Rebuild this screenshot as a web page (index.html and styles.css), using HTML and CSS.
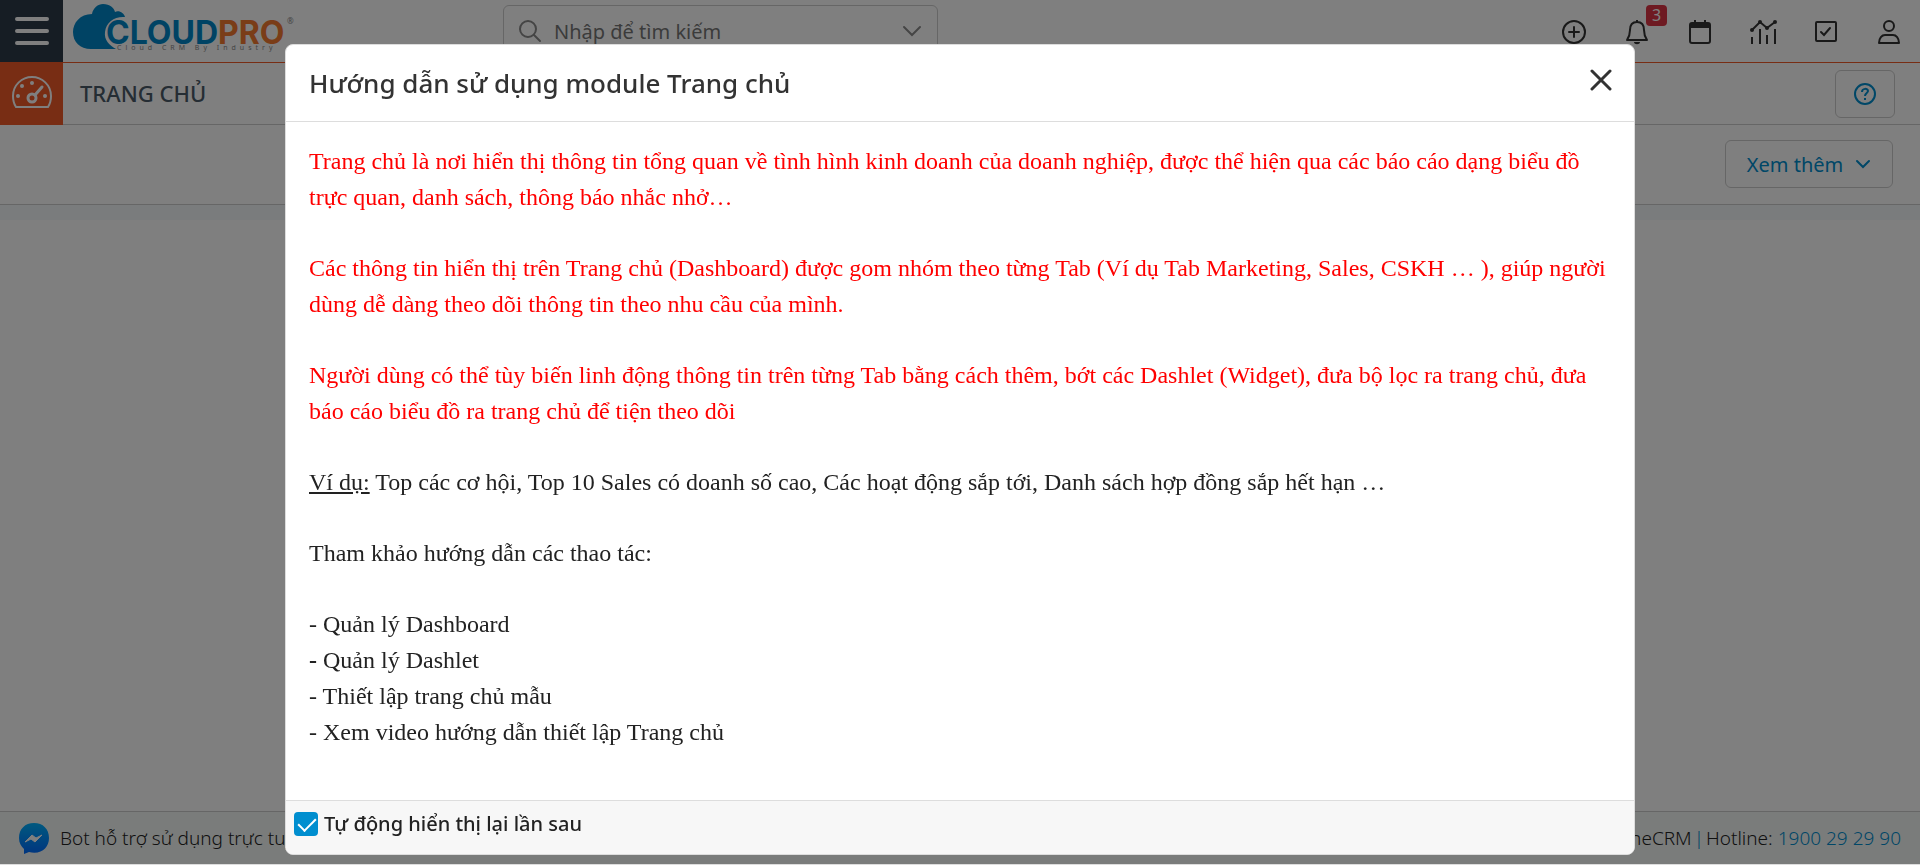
FILE: index.html
```
<!DOCTYPE html>
<html lang="vi">
<head>
	<meta charset="UTF-8">
	<meta name="viewport" content="width=device-width, initial-scale=1.0">
	<title>Trang chủ</title>
	<link rel="stylesheet" href="styles.css">
</head>
<body>
	<div class="page">
		<header class="topbar">
			<button class="menu-btn" aria-label="Menu">
				<svg width="36" height="30" viewBox="0 0 36 30" stroke="#fff" stroke-width="4" stroke-linecap="round"><path d="M3 3h30M3 15h30M3 27h30"/></svg>
			</button>
			<a class="logo" href="#" aria-label="CloudPro">
				<svg width="224" height="52" viewBox="0 0 224 52">
					<path d="M44 46H19C8 46 1 39 1 29c0-9 7-18 19-18C21 5 26 1 31 1c7 0 11 4 12 8 4-2 9 1 10 5-10-1-19 5-20 15-1 8 4 13 11 17z" fill="#0087c9"/>
					<text class="logo-name" x="34" y="41" fill="#0087c9">CLOUD<tspan fill="#f47b30">PRO</tspan></text>
					<text class="logo-tag" x="45" y="47">Cloud CRM By Industry</text>
					<text class="logo-mark" x="215" y="21">®</text>
				</svg>
			</a>
			<div class="search">
				<svg width="24" height="24" viewBox="0 0 24 24" fill="none" stroke="#8a8a8a" stroke-width="2" stroke-linecap="round"><circle cx="10" cy="10" r="8"/><path d="M16 16l6 6"/></svg>
				<input type="text" placeholder="Nhập để tìm kiếm" aria-label="Nhập để tìm kiếm">
				<svg width="20" height="12" viewBox="0 0 20 12" fill="none" stroke="#8a8a8a" stroke-width="2" stroke-linecap="round"><path d="M2 2l8 8 8-8"/></svg>
			</div>
			<nav class="tools">
				<button aria-label="Thêm">
					<svg width="26" height="26" viewBox="0 0 26 26" fill="none" stroke="currentColor" stroke-width="2" stroke-linecap="round"><circle cx="13" cy="13" r="11"/><path d="M13 8v10M8 13h10"/></svg>
				</button>
				<button aria-label="Thông báo">
					<svg width="26" height="26" viewBox="0 0 26 26" fill="none" stroke="currentColor" stroke-width="2" stroke-linejoin="round"><path d="M13 3c-5 0-7 3-7 8 0 5-1 7-3 10h20c-2-3-3-5-3-10 0-5-2-8-7-8zM13 1v2"/><path d="M10 23h6c0 3-6 3-6 0z" fill="currentColor" stroke="none"/></svg>
					<span class="badge">3</span>
				</button>
				<button aria-label="Lịch">
					<svg width="26" height="26" viewBox="0 0 26 26" fill="none" stroke="currentColor" stroke-width="2"><rect x="3" y="4" width="20" height="20" rx="2"/><path d="M3 4h20v5H3z" fill="currentColor" stroke="none"/><path d="M8 1v4M18 1v4"/></svg>
				</button>
				<button aria-label="Báo cáo">
					<svg width="28" height="26" viewBox="0 0 28 26" fill="none" stroke="currentColor" stroke-width="2"><path d="M3 11l8-8 7 6 8-6M3 18v7M11 10v15M18 16v9M26 10v15"/><g fill="currentColor" stroke="none"><circle cx="3" cy="11" r="2"/><circle cx="11" cy="3" r="2"/><circle cx="18" cy="9" r="2"/><circle cx="26" cy="3" r="2"/></g></svg>
				</button>
				<button aria-label="Công việc">
					<svg width="26" height="26" viewBox="0 0 26 26" fill="none" stroke="currentColor" stroke-width="2" stroke-linecap="round"><rect x="3" y="3" width="20" height="19" rx="1"/><path d="M8 13l3 3 6-7"/></svg>
				</button>
				<button aria-label="Tài khoản">
					<svg width="26" height="26" viewBox="0 0 26 26" fill="none" stroke="currentColor" stroke-width="2" stroke-linejoin="round"><circle cx="13" cy="7" r="5"/><path d="M3 24c0-5 3-8 6-8h8c3 0 6 3 6 8z"/></svg>
				</button>
			</nav>
		</header>

		<div class="module-bar">
			<a class="module-icon" href="#" aria-label="Trang chủ">
				<svg width="42" height="34" viewBox="0 0 42 34" fill="none" stroke="#fff" stroke-width="2"><path d="M5 32h32c2-3 3-7 3-11C40 10 31 2 21 2S2 10 2 21c0 4 1 8 3 11z"/><circle cx="21" cy="23" r="4" stroke-width="3"/><path d="M24 20l7-8" stroke-width="3" stroke-linecap="round"/><g fill="#fff" stroke="none"><circle cx="7" cy="21" r="2"/><circle cx="11" cy="11" r="2"/><circle cx="21" cy="8" r="2"/><circle cx="34" cy="21" r="2"/></g></svg>
			</a>
			<h1>TRANG CHỦ</h1>
			<button class="outline-btn help-btn" aria-label="Trợ giúp">
				<svg width="22" height="22" viewBox="0 0 22 22" fill="none" stroke="currentColor" stroke-width="2"><circle cx="11" cy="11" r="10"/><path d="M8 9c0-4 6-4 6-1 0 2-3 2-3 5M11 15v2"/></svg>
			</button>
		</div>

		<div class="dashboard-bar">
			<button class="outline-btn more-btn">Xem thêm
				<svg width="16" height="10" viewBox="0 0 16 10" fill="none" stroke="currentColor" stroke-width="2" stroke-linecap="round"><path d="M2 2l6 6 6-6"/></svg>
			</button>
		</div>
		<main class="dashboard"></main>

		<footer class="page-footer">
			<a class="bot" href="#">
				<svg width="30" height="31" viewBox="0 0 30 31"><defs><linearGradient id="bot" x1="0" y1="0" x2="0" y2="1"><stop offset="0" stop-color="#00b2ff"/><stop offset="1" stop-color="#006aff"/></linearGradient></defs><path d="M15 0C6 0 0 6 0 15c0 5 2 8 5 11v5l5-2c12 3 20-4 20-14C30 6 24 0 15 0z" fill="url(#bot)"/><path d="M6 19l7-7 4 3 6-3-7 7-4-3z" fill="#fff" stroke="#fff"/></svg>
				<span>Bot hỗ trợ sử dụng trực tuyến</span>
			</a>
			<div class="copyright">OnlineCRM<span class="sep">|</span>Hotline: <a href="tel:1900292990">1900 29 29 90</a></div>
		</footer>
	</div>

	<div class="overlay">
		<div class="modal" role="dialog" aria-labelledby="modalTitle">
			<div class="modal-header">
				<h2 id="modalTitle">Hướng dẫn sử dụng module Trang chủ</h2>
				<button class="close-btn" aria-label="Đóng">
					<svg width="22" height="22" viewBox="0 0 22 22" stroke="#333" stroke-width="3" stroke-linecap="round"><path d="M2 2l18 18M20 2L2 20"/></svg>
				</button>
			</div>
			<div class="modal-body">
				<p class="red">Trang chủ là nơi hiển thị thông tin tổng quan về tình hình kinh doanh của doanh nghiệp, được thể hiện qua các báo cáo dạng biểu đồ trực quan, danh sách, thông báo nhắc nhở…</p>
				<p class="red">Các thông tin hiển thị trên Trang chủ (Dashboard) được gom nhóm theo từng Tab (Ví dụ Tab Marketing, Sales, CSKH … ), giúp người dùng dễ dàng theo dõi thông tin theo nhu cầu của mình.</p>
				<p class="red">Người dùng có thể tùy biến linh động thông tin trên từng Tab bằng cách thêm, bớt các Dashlet (Widget), đưa bộ lọc ra trang chủ, đưa báo cáo biểu đồ ra trang chủ để tiện theo dõi</p>
				<p><u>Ví dụ:</u> Top các cơ hội, Top 10 Sales có doanh số cao, Các hoạt động sắp tới, Danh sách hợp đồng sắp hết hạn …</p>
				<p>Tham khảo hướng dẫn các thao tác:</p>
				<ul>
					<li>- Quản lý Dashboard</li>
					<li><b>-</b> Quản lý Dashlet</li>
					<li>- Thiết lập trang chủ mẫu</li>
					<li>- Xem video hướng dẫn thiết lập Trang chủ</li>
				</ul>
			</div>
			<div class="modal-footer">
				<input type="checkbox" id="autoShow" checked>
				<label for="autoShow">Tự động hiển thị lại lần sau</label>
			</div>
		</div>
	</div>
</body>
</html>
```
FILE: styles.css
```
* {
	box-sizing: border-box;
}

body {
	margin: 0;
	font-family: 'Noto Sans', sans-serif;
	font-size: 20px;
	color: #222;
	background-color: #fff;
}

button {
	font: inherit;
	padding: 0;
	border: none;
	background: none;
	cursor: pointer;
}

svg {
	display: block;
}

a {
	color: #008ecf;
	text-decoration: none;
}

.page {
	display: flex;
	flex-direction: column;
	height: 100vh;
	padding-bottom: 1px;
}

/* top bar */
.topbar {
	display: flex;
	align-items: flex-start;
	height: 63px;
	border-bottom: 1px solid #f15a29;
}

.menu-btn {
	display: flex;
	justify-content: center;
	align-items: center;
	width: 63px;
	height: 62px;
	background-color: #2c3b49;
}

.logo {
	margin: 3px 0 0 9px;
}

.logo-name {
	font-family: Inter, sans-serif;
	font-weight: 700;
	font-size: 32px;
}

.logo-tag {
	font-size: 7px;
	letter-spacing: 4px;
	fill: #888;
}

.logo-mark {
	font-size: 8px;
	fill: #888;
}

.search {
	display: flex;
	align-items: center;
	width: 435px;
	height: 52px;
	margin: 5px 0 0 207px;
	padding: 0 15px 0 14px;
	border: 1px solid #ccc;
	border-radius: 6px;
}

.search input {
	flex: 1;
	min-width: 0;
	padding: 0 12px;
	border: none;
	outline: none;
	background: transparent;
	font: inherit;
}

.search input::placeholder {
	color: #777;
}

.tools {
	display: flex;
	margin: 19px 0 0 auto;
}

.tools button {
	position: relative;
	display: flex;
	justify-content: center;
	width: 63px;
	color: #333;
}

.badge {
	position: absolute;
	top: -14px;
	right: 1px;
	width: 21px;
	border-radius: 4px;
	background-color: #dc3545;
	color: #fff;
	font-size: 16px;
	line-height: 21px;
}

/* module bar */
.module-bar {
	display: flex;
	align-items: center;
	height: 62px;
	padding-right: 25px;
	border-bottom: 1px solid #ccc;
}

.module-icon {
	display: flex;
	justify-content: center;
	align-items: center;
	width: 63px;
	height: 62px;
	padding-bottom: 4px;
	background-color: #f15a29;
}

.module-bar h1 {
	margin: 0 auto 0 17px;
	padding-bottom: 2px;
	color: #4b5b69;
	font-size: 22px;
	font-weight: 500;
}

.outline-btn {
	display: flex;
	justify-content: center;
	align-items: center;
	gap: 12px;
	height: 48px;
	border: 1px solid #ccc;
	border-radius: 6px;
	color: #008ecf;
}

.help-btn {
	width: 60px;
}

.dashboard-bar {
	display: flex;
	justify-content: flex-end;
	padding: 15px 27px 16px;
	border-bottom: 1px solid #ccc;
}

.more-btn {
	width: 168px;
}

.dashboard {
	flex: 1;
	border-top: 15px solid #f5f8fa;
}

.page-footer {
	display: flex;
	justify-content: space-between;
	align-items: center;
	height: 53px;
	padding: 0 19px;
	border-top: 1px solid #ccc;
	background-color: #f5f8f6;
	font-size: 19px;
	font-weight: 300;
}

.bot {
	display: flex;
	align-items: center;
	gap: 11px;
	color: #222;
}

.sep {
	padding: 0 2px;
	color: #008ecf;
}

/* guide popup */
.overlay {
	position: fixed;
	inset: 0;
	display: flex;
	justify-content: center;
	align-items: flex-start;
	padding-top: 44px;
	border-bottom: 1px solid #ddd;
	background-color: rgba(0, 0, 0, 0.5);
	background-clip: padding-box;
}

.modal {
	width: 90%;
	max-width: 1350px;
	border: 1px solid #ddd;
	border-radius: 8px;
	background-color: #fff;
	overflow: hidden;
}

.modal-header {
	display: flex;
	justify-content: space-between;
	align-items: center;
	height: 77px;
	padding: 0 22px 0 23px;
	border-bottom: 1px solid #ddd;
}

.modal-header h2 {
	margin: 0;
	color: #333;
	font-size: 26px;
	font-weight: 500;
}

.close-btn {
	padding-bottom: 6px;
}

.modal-body {
	padding: 21px 23px 50px;
	font-family: 'Liberation Serif', serif;
	font-size: 24px;
	line-height: 36px;
}

.modal-body p {
	margin: 0 0 35px;
}

.modal-body ul {
	margin: 0;
	padding: 0;
	list-style: none;
}

.modal-body .red {
	color: #f00;
}

.modal-footer {
	display: flex;
	align-items: flex-start;
	gap: 6px;
	height: 54px;
	padding: 11px 8px;
	border-top: 1px solid #ddd;
	background-color: #f7f7f7;
	font-weight: 500;
	line-height: 24px;
}

.modal-footer input {
	appearance: none;
	width: 24px;
	height: 24px;
	margin: 0;
	border-radius: 4px;
	background-color: #008ecf;
}

.modal-footer input:checked::before {
	content: "";
	display: block;
	width: 8px;
	height: 15px;
	margin: 2px 8px;
	border: solid #fff;
	border-width: 0 2px 2px 0;
	transform: rotate(45deg);
}
```
